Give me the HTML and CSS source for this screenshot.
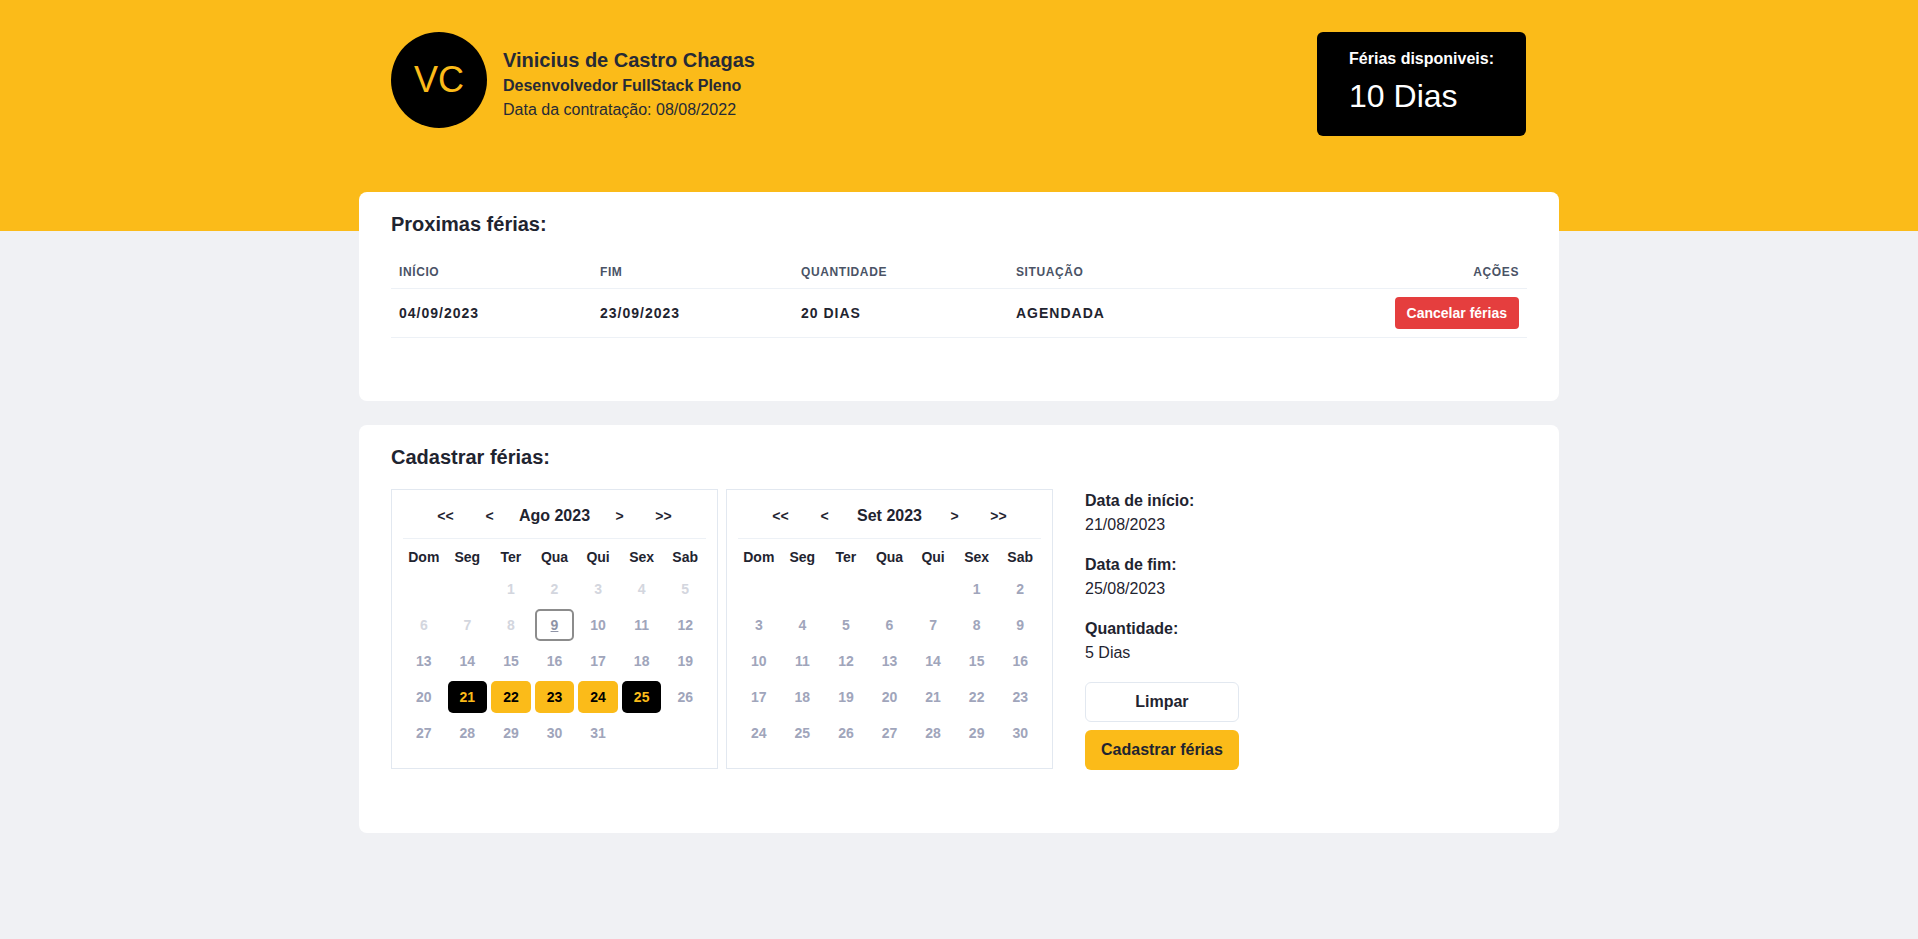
FILE: index.html
```html
<!DOCTYPE html>
<html lang="pt-BR">
<head>
<meta charset="utf-8">
<title>Férias</title>
<link rel="stylesheet" href="styles.css">
</head>
<body>
<header class="top">
  <div class="top-inner">
    <div class="profile">
      <div class="avatar">VC</div>
      <div class="who">
        <div class="name">Vinicius de Castro Chagas</div>
        <div class="role">Desenvolvedor FullStack Pleno</div>
        <div class="hired">Data da contratação: 08/08/2022</div>
      </div>
    </div>
    <div class="balance">
      <div class="balance-label">Férias disponiveis:</div>
      <div class="balance-value">10 Dias</div>
    </div>
  </div>
</header>

<main class="main">
  <section class="card">
    <h2 class="card-title">Proximas férias:</h2>
    <table class="table">
      <colgroup>
        <col class="c1"><col class="c2"><col class="c3"><col class="c4"><col>
      </colgroup>
      <thead>
        <tr>
          <th>Início</th>
          <th>Fim</th>
          <th>Quantidade</th>
          <th>Situação</th>
          <th class="right">Ações</th>
        </tr>
      </thead>
      <tbody>
        <tr>
          <td>04/09/2023</td>
          <td>23/09/2023</td>
          <td>20 DIAS</td>
          <td>AGENDADA</td>
          <td class="right"><button class="btn-cancel">Cancelar férias</button></td>
        </tr>
      </tbody>
    </table>
  </section>

  <section class="card">
    <h2 class="card-title">Cadastrar férias:</h2>
    <div class="register">
      <div class="cal">
        <div class="cal-nav">
          <span class="nav-btn">&lt;&lt;</span>
          <span class="nav-btn">&lt;</span>
          <span class="nav-label">Ago 2023</span>
          <span class="nav-btn">&gt;</span>
          <span class="nav-btn">&gt;&gt;</span>
        </div>
        <div class="cal-grid">
          <span class="wd">Dom</span><span class="wd">Seg</span><span class="wd">Ter</span><span class="wd">Qua</span><span class="wd">Qui</span><span class="wd">Sex</span><span class="wd">Sab</span>
          <span class="day"></span><span class="day"></span>
          <span class="day off">1</span><span class="day off">2</span><span class="day off">3</span><span class="day off">4</span><span class="day off">5</span>
          <span class="day off">6</span><span class="day off">7</span><span class="day off">8</span><span class="day today">9</span><span class="day">10</span><span class="day">11</span><span class="day">12</span>
          <span class="day">13</span><span class="day">14</span><span class="day">15</span><span class="day">16</span><span class="day">17</span><span class="day">18</span><span class="day">19</span>
          <span class="day">20</span><span class="day edge">21</span><span class="day range">22</span><span class="day range">23</span><span class="day range">24</span><span class="day edge">25</span><span class="day">26</span>
          <span class="day">27</span><span class="day">28</span><span class="day">29</span><span class="day">30</span><span class="day">31</span>
        </div>
      </div>
      <div class="cal">
        <div class="cal-nav">
          <span class="nav-btn">&lt;&lt;</span>
          <span class="nav-btn">&lt;</span>
          <span class="nav-label">Set 2023</span>
          <span class="nav-btn">&gt;</span>
          <span class="nav-btn">&gt;&gt;</span>
        </div>
        <div class="cal-grid">
          <span class="wd">Dom</span><span class="wd">Seg</span><span class="wd">Ter</span><span class="wd">Qua</span><span class="wd">Qui</span><span class="wd">Sex</span><span class="wd">Sab</span>
          <span class="day"></span><span class="day"></span><span class="day"></span><span class="day"></span><span class="day"></span>
          <span class="day">1</span><span class="day">2</span>
          <span class="day">3</span><span class="day">4</span><span class="day">5</span><span class="day">6</span><span class="day">7</span><span class="day">8</span><span class="day">9</span>
          <span class="day">10</span><span class="day">11</span><span class="day">12</span><span class="day">13</span><span class="day">14</span><span class="day">15</span><span class="day">16</span>
          <span class="day">17</span><span class="day">18</span><span class="day">19</span><span class="day">20</span><span class="day">21</span><span class="day">22</span><span class="day">23</span>
          <span class="day">24</span><span class="day">25</span><span class="day">26</span><span class="day">27</span><span class="day">28</span><span class="day">29</span><span class="day">30</span>
        </div>
      </div>
      <div class="info">
        <div class="info-group">
          <div class="info-label">Data de início:</div>
          <div class="info-value">21/08/2023</div>
        </div>
        <div class="info-group">
          <div class="info-label">Data de fim:</div>
          <div class="info-value">25/08/2023</div>
        </div>
        <div class="info-group">
          <div class="info-label">Quantidade:</div>
          <div class="info-value">5 Dias</div>
        </div>
        <div class="actions">
          <button class="btn btn-clear">Limpar</button>
          <button class="btn btn-save">Cadastrar férias</button>
        </div>
      </div>
    </div>
  </section>
</main>
</body>
</html>
```

FILE: styles.css
```css
* { box-sizing: border-box; }

body {
  margin: 0;
  background: #f0f1f4;
  font-family: "Liberation Sans", Arial, sans-serif;
  color: #1f2430;
}

.top {
  background: #fbbb19;
  height: 231px;
}

.top-inner {
  max-width: 1200px;
  margin: 0 auto;
  padding: 32px 32px 0;
  display: flex;
  justify-content: space-between;
  align-items: flex-start;
}

.profile {
  display: flex;
  align-items: flex-start;
  gap: 16px;
}

.avatar {
  width: 96px;
  height: 96px;
  border-radius: 50%;
  background: #000;
  color: #fbbb19;
  font-size: 36px;
  display: flex;
  align-items: center;
  justify-content: center;
}

.who {
  padding-top: 14px;
  color: #262a36;
}

.name {
  font-size: 20px;
  line-height: 28px;
  font-weight: 700;
}

.role {
  font-size: 16px;
  line-height: 24px;
  font-weight: 700;
}

.hired {
  font-size: 16px;
  line-height: 24px;
}

.balance {
  background: #000;
  color: #fff;
  border-radius: 6px;
  padding: 15px 32px 20px;
  margin-right: 1px;
}

.balance-label {
  font-size: 16px;
  line-height: 24px;
  font-weight: 700;
}

.balance-value {
  font-size: 32px;
  line-height: 40px;
  margin-top: 5px;
}

.main {
  max-width: 1200px;
  margin: -39px auto 0;
  display: flex;
  flex-direction: column;
  gap: 24px;
}

.card {
  background: #fff;
  border-radius: 8px;
  padding: 18px 32px 63px;
}

.card-title {
  margin: 0;
  font-size: 20px;
  line-height: 28px;
  font-weight: 700;
  color: #1f2430;
}

.table {
  width: 100%;
  margin-top: 16px;
  border-collapse: collapse;
  table-layout: fixed;
}

.c1 { width: 201px; }
.c2 { width: 201px; }
.c3 { width: 215px; }
.c4 { width: 260px; }

.table th {
  text-align: left;
  font-size: 12px;
  line-height: 16px;
  font-weight: 700;
  letter-spacing: 0.05em;
  text-transform: uppercase;
  color: #4a5366;
  padding: 10px 8px 8px;
  border-bottom: 1px solid #edf1f6;
}

.table td {
  font-size: 14px;
  line-height: 20px;
  font-weight: 700;
  letter-spacing: 1px;
  color: #1f2430;
  padding: 8px;
  height: 49px;
  border-bottom: 1px solid #edf1f6;
}

.table .right { text-align: right; }

.btn-cancel {
  font-family: inherit;
  background: #e53e3e;
  color: #fff;
  border: none;
  border-radius: 4px;
  height: 32px;
  padding: 0 12px;
  font-size: 14px;
  font-weight: 700;
  letter-spacing: 0;
}

.register {
  display: flex;
  align-items: flex-start;
  margin-top: 18px;
}

.cal {
  width: 327px;
  height: 280px;
  border: 1px solid #e2e8f0;
  padding: 10px 10px 16px;
  margin-right: 8px;
}

.cal-nav {
  display: flex;
  justify-content: center;
  align-items: center;
  height: 39px;
  padding-bottom: 6px;
  border-bottom: 1px solid #edf1f6;
  margin: 0 1px;
}

.nav-btn {
  width: 44px;
  text-align: center;
  font-size: 14px;
  font-weight: 700;
  color: #1f2430;
}

.nav-label {
  width: 86px;
  text-align: center;
  font-size: 16px;
  font-weight: 700;
  color: #1f2430;
}

.cal-grid {
  display: grid;
  grid-template-columns: repeat(7, 1fr);
  grid-template-rows: 28px;
  grid-auto-rows: 36px;
  margin-top: 4px;
}

.wd {
  display: flex;
  align-items: center;
  justify-content: center;
  font-size: 14px;
  font-weight: 700;
  color: #1f2430;
}

.day {
  margin: 2px;
  border-radius: 5px;
  display: flex;
  align-items: center;
  justify-content: center;
  font-size: 14px;
  font-weight: 700;
  color: #a0a5bb;
}

.day.off { color: #d3d6de; }

.day.today {
  border: 2px solid #8c8c8c;
  color: #8e93a6;
  text-decoration: underline;
}

.day.range {
  background: #fbbb19;
  color: #000;
}

.day.edge {
  background: #000;
  color: #fbbb19;
}

.info {
  margin-left: 24px;
  display: flex;
  flex-direction: column;
  color: #1f2430;
}

.info-group + .info-group { margin-top: 16px; }

.info-label {
  font-size: 16px;
  line-height: 24px;
  font-weight: 700;
}

.info-value {
  font-size: 16px;
  line-height: 24px;
}

.actions {
  display: flex;
  flex-direction: column;
  gap: 8px;
  margin-top: 17px;
}

.btn {
  font-family: inherit;
  height: 40px;
  padding: 0 16px;
  border-radius: 6px;
  font-size: 16px;
  font-weight: 700;
  color: #1f2430;
}

.btn-clear {
  background: #fff;
  border: 1px solid #e2e8f0;
}

.btn-save {
  background: #fbbb19;
  border: none;
}
```
